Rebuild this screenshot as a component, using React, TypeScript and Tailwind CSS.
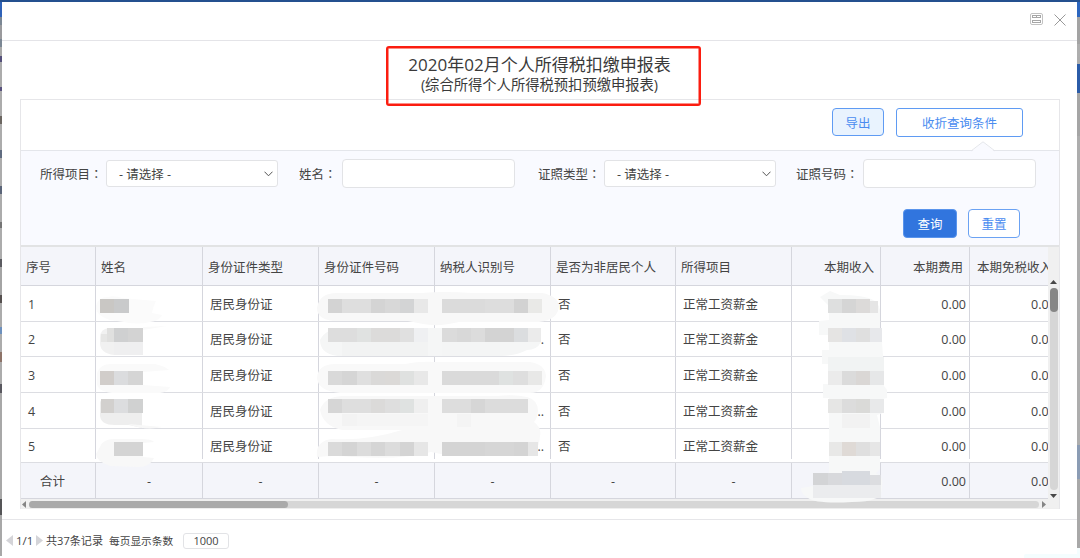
import type { ReactNode } from "react"

type Block = [x: number, y: number, w: number, fill: string, h?: number]

const COLUMNS = "grid grid-cols-[75px_107px_116px_116px_116px_125px_116px_89px_89px_78px]"

const HEADERS = [
  "序号",
  "姓名",
  "身份证件类型",
  "身份证件号码",
  "纳税人识别号",
  "是否为非居民个人",
  "所得项目",
  "本期收入",
  "本期费用",
  "本期免税收入",
]

const ROWS = [
  { id: "1", height: "h-[36px]", text: "pt-[2px]", more: "" },
  { id: "2", height: "h-[35px]", text: "pt-[2px]", more: "." },
  { id: "3", height: "h-[36px]", text: "pt-[2px]", more: "" },
  { id: "4", height: "h-[36px]", text: "pt-[2px]", more: ".." },
  { id: "5", height: "h-[34px] pb-[3px]", text: "pt-[6px]", more: ".." },
]

// slivers of the page behind the dialog: [height, colour]
const LEFT_EDGE: [number, string][] = [
  [15, "#2f62b8"], [8, "#7b8794"], [14, "#9a9a9d"], [8, "#7b8794"], [9, "#a9a9a9"], [6, "#54507a"],
  [25, "#acacac"], [4, "#57517c"], [25, "#acacac"], [8, "#6b6660"], [26, "#acacac"], [8, "#606c80"],
  [28, "#acacac"], [8, "#5a6478"], [28, "#acacac"], [6, "#747474"], [31, "#acacac"], [8, "#5b5b60"],
  [28, "#a4a4a4"], [8, "#55504f"], [24, "#acacac"], [7, "#6d90bd"], [18, "#acacac"], [10, "#8d7368"],
  [22, "#acacac"], [9, "#59585f"], [106, "#a8a8a8"], [16, "#555557"], [41, "#a8a8a8"],
]

const RIGHT_EDGE: [number, string][] = [
  [15, "#2c66bf"], [27, "#a3a3a3"], [13, "#aeaeae"], [7, "#adadad"], [29, "#2b5ca8"], [43, "#a5a5a5"],
  [309, "#adadad"], [34, "#8b9cb4"], [69, "#a8a8a8"], [12, "#f4fdfe"],
]

// soft brush strokes under the mosaic blocks
const SMEARS: [string, string][] = [
  ["M96 306q2-9 12-9 6-2 14 1l34 3q-2 3-4 12l10 2q-3 6-12 7-12 3-26 0l-14-2q-15-5-14-14z", "#fbfbfb"],
  ["M100 338q0-10 10-10h32v27h-28q-14-2-14-12z", "#f1f1f1"],
  ["M143 327l24-1-24 4z", "#fafafa"],
  ["M97 373q3-9 14-9h44q10 2 14 6l-26 2v13l27 2q-2 5-10 6h-48q-16-2-15-11z", "#fafafa"],
  ["M100 403q0-4 6-4h36v29l-13-3h-14q-15 0-15-10z", "#eeeeee"],
  ["M128 424l34 3q-16 4-34-3z", "#f8f8f8"],
  ["M100 447q3-8 14-8h26q12 0 14 3l-11 1v14l11 1q-4 9-16 9l-28-1q-14-5-14-12z", "#f8f8f8"],
  ["M317 308q2-15 20-15h85q20-2 50 0h70q16 3 17 13-1 14-20 16h-80q-20 5-36 2l-15-3h-75q-16-2-16-13z", "#f8f8f8"],
  ["M320 340q6-12 24-12h188q10 0 9 14-4 8-14 8-12 6-26 6H338q-18-2-18-16z", "#f5f6f6"],
  ["M317 378q1-14 18-14h70q14-3 30-2h95q15 2 16 14-2 17-16 17H340q-22-2-23-15z", "#f9f9f9"],
  ["M320 410q4-13 22-14h155q18-2 30 1 11 3 11 14-1 8-4 11 8 6 6 14-1 18-14 19h-80l-15-3q-28 8-78 5-18-2-36 0-2-16 15-18 35 2 70-9h-60q-19-4-22-20z", "#f8f8f8"],
  ["M820 297l10-6 10 4q24 0 33 5 8 5 7 14v14h1l2 28 1 14v16l3 4v8l-4 1v14l-6 2 3 12v42l-4 4q8 4 6 14 0 10-8 12-6 3-22 3-36 2-44-4-7-4-7-10l12-2v-12h16v-76h-6v-14h6v-20h-7v-14h7v-15h-10v-14l10-1v-14z", "#f7f8f8"],
]

const BLOCKS: Block[] = [
  [100, 299, 14, "#c9c7c4"], [114, 299, 15, "#c9cacb"],
  [101, 334, 6, "#e6e6e5", 8], [107, 328, 7, "#e0e0df"], [114, 328, 15, "#cfd0d1"], [128, 328, 15, "#d3d3d3"],
  [114, 342, 29, "#efeff0", 13],
  [100, 371, 14, "#d1cdca"], [114, 371, 15, "#dbdcde"], [128, 371, 15, "#d5d5d5"],
  [101, 399, 13, "#d2d0ce"], [114, 399, 15, "#dcdddf"], [128, 399, 15, "#d0d1d1"],
  [114, 442, 29, "#d4d4d4"],

  [328, 299, 14, "#d3d3d3"], [342, 299, 29, "#dedede"], [371, 299, 14, "#d4d4d4"], [385, 299, 15, "#d8d8d8"],
  [400, 299, 14, "#d3d4d5"], [414, 299, 14, "#e8e8e8"],
  [442, 299, 43, "#dbdbdb"], [485, 299, 29, "#dddddd"], [514, 299, 14, "#d2d2d2"], [528, 299, 14, "#e9e9e7"],

  [328, 328, 29, "#dddddd"], [357, 328, 14, "#e0e2e1"], [371, 328, 29, "#dcdbda"], [400, 328, 14, "#e0e0e0"],
  [414, 328, 14, "#eff0f2"], [442, 328, 15, "#dbdbdb"], [457, 328, 14, "#d8d8d8"], [471, 328, 14, "#dcdcdc"],
  [485, 328, 29, "#d3d3d3"], [514, 328, 14, "#dbdddf"], [528, 328, 13, "#ebebeb"],
  [342, 342, 86, "#f2f3f3", 14], [442, 342, 58, "#f4f5f5", 14],

  [328, 371, 14, "#d9d9d9"], [342, 371, 15, "#d5d5d5"], [357, 371, 14, "#dfdfdf"], [371, 371, 14, "#dad9d8"],
  [385, 371, 15, "#dbd9d7"], [400, 371, 14, "#dfe1e0"], [414, 371, 14, "#e8e8e8"],
  [442, 371, 57, "#dadada"], [499, 371, 14, "#dfe2e1"], [513, 371, 15, "#dedede"], [528, 371, 14, "#e8e8e7"],

  [328, 399, 14, "#d6d6d6"], [342, 399, 29, "#dedede"], [371, 399, 14, "#dbdad9"], [385, 399, 15, "#dedede"],
  [400, 399, 14, "#dfe2e1"], [414, 399, 14, "#efefef"],
  [442, 399, 29, "#dddddd"], [471, 399, 14, "#d6d6d6"], [485, 399, 43, "#dcdcdc"],
  [342, 414, 15, "#f3f3f3", 12], [357, 414, 71, "#f5f5f5", 12], [457, 414, 14, "#f4f4f4", 13],

  [328, 442, 14, "#dadada"], [342, 442, 15, "#d4d4d4"], [357, 442, 14, "#dcdcdc"], [371, 442, 14, "#d5d5d5"],
  [385, 442, 15, "#dcdcdc"], [400, 442, 14, "#d4d4d4"], [414, 442, 14, "#e6e6e6"],
  [442, 442, 43, "#d4d4d4"], [485, 442, 29, "#d6d6d6"], [514, 442, 14, "#d4d4d4"], [528, 442, 10, "#e6e6e6"],

  [828, 299, 14, "#dedfdf"], [842, 299, 14, "#d5d5d5"], [856, 299, 14, "#dcdad9"], [870, 301, 8, "#e5e5e5", 12],
  [828, 328, 14, "#e5e4e3"], [842, 328, 14, "#dfe1e5"], [856, 328, 14, "#dfdfdf"], [870, 328, 12, "#e7e8eb"],
  [828, 371, 14, "#ebebeb"], [842, 371, 14, "#dbdbdb"], [856, 371, 14, "#dad7d5"], [870, 371, 14, "#e6e7e8"],
  [828, 399, 14, "#e6e6e5"], [842, 399, 14, "#dcdcdc"], [856, 399, 14, "#dadad8"], [870, 399, 14, "#e8e9ea"],
  [829, 442, 13, "#e8e8e7"], [842, 442, 14, "#dfdad6"], [856, 442, 14, "#dfdfdf"], [870, 442, 10, "#e6e6e6"],
  [828, 357, 56, "#f1f3f3"], [842, 414, 28, "#f2f2f2"],
  [813, 473, 15, "#d3d4d6", 12], [828, 473, 14, "#d8d9dc", 12], [842, 471, 28, "#d7dadf", 14], [870, 475, 11, "#dcdde0", 10],
  [813, 485, 68, "#ebecee", 13],
]

function Mosaic() {
  return (
    <svg className="pointer-events-none absolute inset-0" width="1080" height="558" viewBox="0 0 1080 558">
      {SMEARS.map(([d, fill]) => (
        <path key={d} d={d} fill={fill} />
      ))}
      <g shapeRendering="crispEdges">
        {BLOCKS.map(([x, y, w, fill, h = 14]) => (
          <rect key={`${x}-${y}`} x={x} y={y} width={w} height={h} fill={fill} />
        ))}
      </g>
    </svg>
  )
}

function Edge({ parts, className }: { parts: [number, string][]; className: string }) {
  return (
    <div className={`flex shrink-0 flex-col ${className}`}>
      {parts.map(([height, background], i) => (
        <div key={i} className="shrink-0" style={{ height, background }} />
      ))}
    </div>
  )
}

function Cell({ children, className = "" }: { children?: ReactNode; className?: string }) {
  return (
    <div className={`flex items-center whitespace-nowrap border-r border-[#d5d6dd] last:border-r-0 ${className}`}>
      {children}
    </div>
  )
}

function Label({ children, className }: { children: string; className: string }) {
  return (
    <span className={`whitespace-nowrap pt-[2px] ${className}`}>
      {children}
      <span className="font-['Noto_Sans_CJK_TC',sans-serif]" lang="zh-Hant">：</span>
    </span>
  )
}

function Select() {
  return (
    <div className="flex h-[27px] w-[172px] items-center justify-between rounded-[3px] border border-[#e2e3e6] bg-white pl-3 pr-1">
      <span className="pt-[2px]">- 请选择 -</span>
      <svg width="9" height="6" viewBox="0 0 9 6" fill="none" stroke="#555" strokeWidth="1">
        <path d="M.5 .7 4.5 4.8 8.5 .7" />
      </svg>
    </div>
  )
}

function Input() {
  return <div className="h-[29px] w-[173px] rounded-[4px] border border-[#e2e3e6] bg-white" />
}

export default function App() {
  return (
    <div className="relative flex h-[558px] w-[1080px] flex-col overflow-hidden bg-white font-['Open_Sans','Noto_Sans_CJK_SC',sans-serif] text-[12.5px] leading-[18px] text-[#444]">
      <div className="h-[2px] shrink-0 bg-[#24508f]" />
      <div className="flex min-h-0 flex-1">
        <Edge parts={LEFT_EDGE} className="w-[2px]" />

        <div className="flex w-[1075px] shrink-0 flex-col">
          <div className="flex h-[39px] shrink-0 justify-end gap-[11px] border-b border-[#e4e4e8] pr-[11px]">
            <svg className="mt-[11px]" width="13" height="12" viewBox="0 0 13 12" fill="none" stroke="#a6a6a6">
              <rect x=".5" y=".5" width="12" height="11" rx="1.5" stroke="#c2c2c2" />
              <path d="M2 2.5h9M2 4.5h9M2.5 7.5h8M2.5 9.5h8M2.5 2v3M6.5 2v3M10.5 2v3M2.5 7v3M10.5 7v3" />
            </svg>
            <svg className="mt-[12px]" width="12" height="12" viewBox="0 0 12 12" fill="none" stroke="#999">
              <path d="M.5 .5l11 11M11.5 .5l-11 11" />
            </svg>
          </div>

          <div className="flex h-[58px] shrink-0 flex-col items-center pt-[12px] text-[#3a3a3a]">
            <h1 className="text-[17px] leading-[23px]">2020年02月个人所得税扣缴申报表</h1>
            <h2 className="text-[14.3px] leading-[18px]">(综合所得个人所得税预扣预缴申报表)</h2>
          </div>

          <div className="ml-[18px] flex h-[410px] w-[1040px] shrink-0 flex-col border-x border-t border-[#e6e6e9]">
            <div className="flex h-[50px] shrink-0 gap-3 pl-[811px] pt-[8px] text-[#4a8cf0]">
              <div className="flex h-[28px] w-[52px] items-center justify-center rounded-[4px] border border-[#5f9bf3] bg-[#e9f3fe] pt-[3px]">
                导出
              </div>
              <div className="flex h-[29px] w-[127px] items-center justify-center rounded-[3px] border border-[#5f9bf3] bg-white pt-[2px]">
                收折查询条件
              </div>
            </div>

            <div className="relative h-[97px] shrink-0 border-b-2 border-t border-[#e2e3e4] border-t-[#e4e6eb] bg-[#f9faff]">
              <svg className="absolute -top-[10px] left-[950px]" width="24" height="11" viewBox="0 0 24 11">
                <path d="M0 11 12 1 24 11z" fill="#f9faff" />
                <path d="M0 10 12 .8 24 10" fill="none" stroke="#e4e6eb" />
              </svg>
              <div className="flex items-center pl-[19px] pt-[8px]">
                <Label className="w-[66px]">所得项目</Label>
                <Select />
                <Label className="ml-[21px] w-[43px]">姓名</Label>
                <Input />
                <Label className="ml-[23px] w-[66px]">证照类型</Label>
                <Select />
                <Label className="ml-[20px] w-[67px]">证照号码</Label>
                <Input />
              </div>
              <div className="flex gap-[11px] pl-[882px] pt-[21px]">
                <div className="flex h-[29px] w-[54px] items-center justify-center rounded-[4px] border border-[#5a94ec] bg-[#3175de] pt-[2px] text-white">
                  查询
                </div>
                <div className="flex h-[29px] w-[52px] items-center justify-center rounded-[4px] border border-[#6ba2f3] bg-white pt-[2px] text-[#4a8cf0]">
                  重置
                </div>
              </div>
            </div>

            <div className="flex h-[252px] shrink-0">
              <div className="w-[1027px] overflow-hidden">
                <div className={`${COLUMNS} h-[39px] border-b border-[#d5d6dd] bg-[#f4f5fa]`}>
                  {HEADERS.map((title, i) => (
                    <Cell
                      key={title}
                      className={
                        i > 6 && i < 9 ? "justify-end pr-[6px] pt-[4px]" : i === 9 ? "pl-[7px] pt-[4px]" : "pl-[5px] pt-[4px]"
                      }
                    >
                      {title}
                    </Cell>
                  ))}
                </div>
                {ROWS.map((row) => (
                  <div key={row.id} className={`${COLUMNS} ${row.height} border-b border-[#dcdde2]`}>
                    <Cell className={`pl-[7px] ${row.text}`}>{row.id}</Cell>
                    <Cell />
                    <Cell className={`pl-[7px] ${row.text}`}>居民身份证</Cell>
                    <Cell />
                    <Cell className={`justify-end pr-[6px] ${row.text}`}>{row.more}</Cell>
                    <Cell className={`pl-[7px] ${row.text}`}>否</Cell>
                    <Cell className={`pl-[7px] ${row.text}`}>正常工资薪金</Cell>
                    <Cell />
                    <Cell className={`justify-end pr-[3px] ${row.text}`}>0.00</Cell>
                    <Cell className={`pl-[61px] ${row.text}`}>0.00</Cell>
                  </div>
                ))}
                <div className={`${COLUMNS} h-[36px] border-b border-[#d5d6dd] bg-[#f4f5fa]`}>
                  <Cell className="pl-[19px] pt-[3px]">合计</Cell>
                  {[1, 2, 3, 4, 5, 6].map((n) => (
                    <Cell key={n} className="justify-center pt-[2px]">
                      -
                    </Cell>
                  ))}
                  <Cell />
                  <Cell className="justify-end pr-[3px] pt-[2px]">0.00</Cell>
                  <Cell className="pl-[61px] pt-[2px]">0.00</Cell>
                </div>
              </div>
              <div className="flex w-[11px] flex-col items-center bg-[#f0f0f0] pt-[33px]">
                <svg className="shrink-0" width="7" height="4" viewBox="0 0 7 4">
                  <path d="M0 4 3.5 0 7 4z" fill="#484848" />
                </svg>
                <div className="mt-1 h-[202px] w-[8px] shrink-0 rounded-full bg-[#d6d6d6]">
                  <div className="h-[24px] rounded-full bg-[#868686]" />
                </div>
                <svg className="mt-[4px] shrink-0" width="7" height="4" viewBox="0 0 7 4">
                  <path d="M0 0 3.5 4 7 0z" fill="#484848" />
                </svg>
              </div>
            </div>

            <div className="flex h-[10px] shrink-0 items-center border-b border-[#eee] bg-[#f0f0f0] pl-px pt-px">
              <svg width="4" height="7" viewBox="0 0 4 7">
                <path d="M4 0 0 3.5 4 7z" fill="#858585" />
              </svg>
              <div className="ml-[3px] h-[7px] w-[1010px] rounded-full bg-[#d6d6d6]">
                <div className="h-full w-[259px] rounded-full bg-[#aaaaaa]" />
              </div>
              <svg className="ml-[3px]" width="4" height="7" viewBox="0 0 4 7">
                <path d="M0 0 4 3.5 0 7z" fill="#858585" />
              </svg>
            </div>
          </div>

          <div className="mt-[10px] flex h-[39px] shrink-0 items-center border-t border-[#e6e6e9] pl-[4px] pt-[3px] text-[11.1px]">
            <svg width="7" height="11" viewBox="0 0 7 11">
              <path d="M7 0 0 5.5 7 11z" fill="#d4d4d8" />
            </svg>
            <span className="ml-[3px] w-[20px] text-[11.5px]">1/1</span>
            <svg width="7" height="11" viewBox="0 0 7 11">
              <path d="M0 0 7 5.5 0 11z" fill="#d4d4d8" />
            </svg>
            <span className="ml-[3px] w-[63px] whitespace-nowrap">共37条记录</span>
            <span className="w-[74px] whitespace-nowrap text-[10.7px]">每页显示条数</span>
            <div className="flex h-[16px] w-[46px] items-center justify-center rounded-[3px] border border-[#e2e3e6] text-[11px]">
              1000
            </div>
          </div>
        </div>

        <Edge parts={RIGHT_EDGE} className="w-[3px]" />
      </div>

      <div className="absolute left-[386px] top-[46px] h-[60px] w-[315px] rounded-[3px] border-2 border-[#fb1d10] shadow-[inset_0_0_0_0.5px_#fb1d10]" />
      <Mosaic />
      <div className="absolute bottom-0 right-0 h-[4px] w-[56px] rounded-tl-[2px] bg-[#f4fdfe]" />
    </div>
  )
}
